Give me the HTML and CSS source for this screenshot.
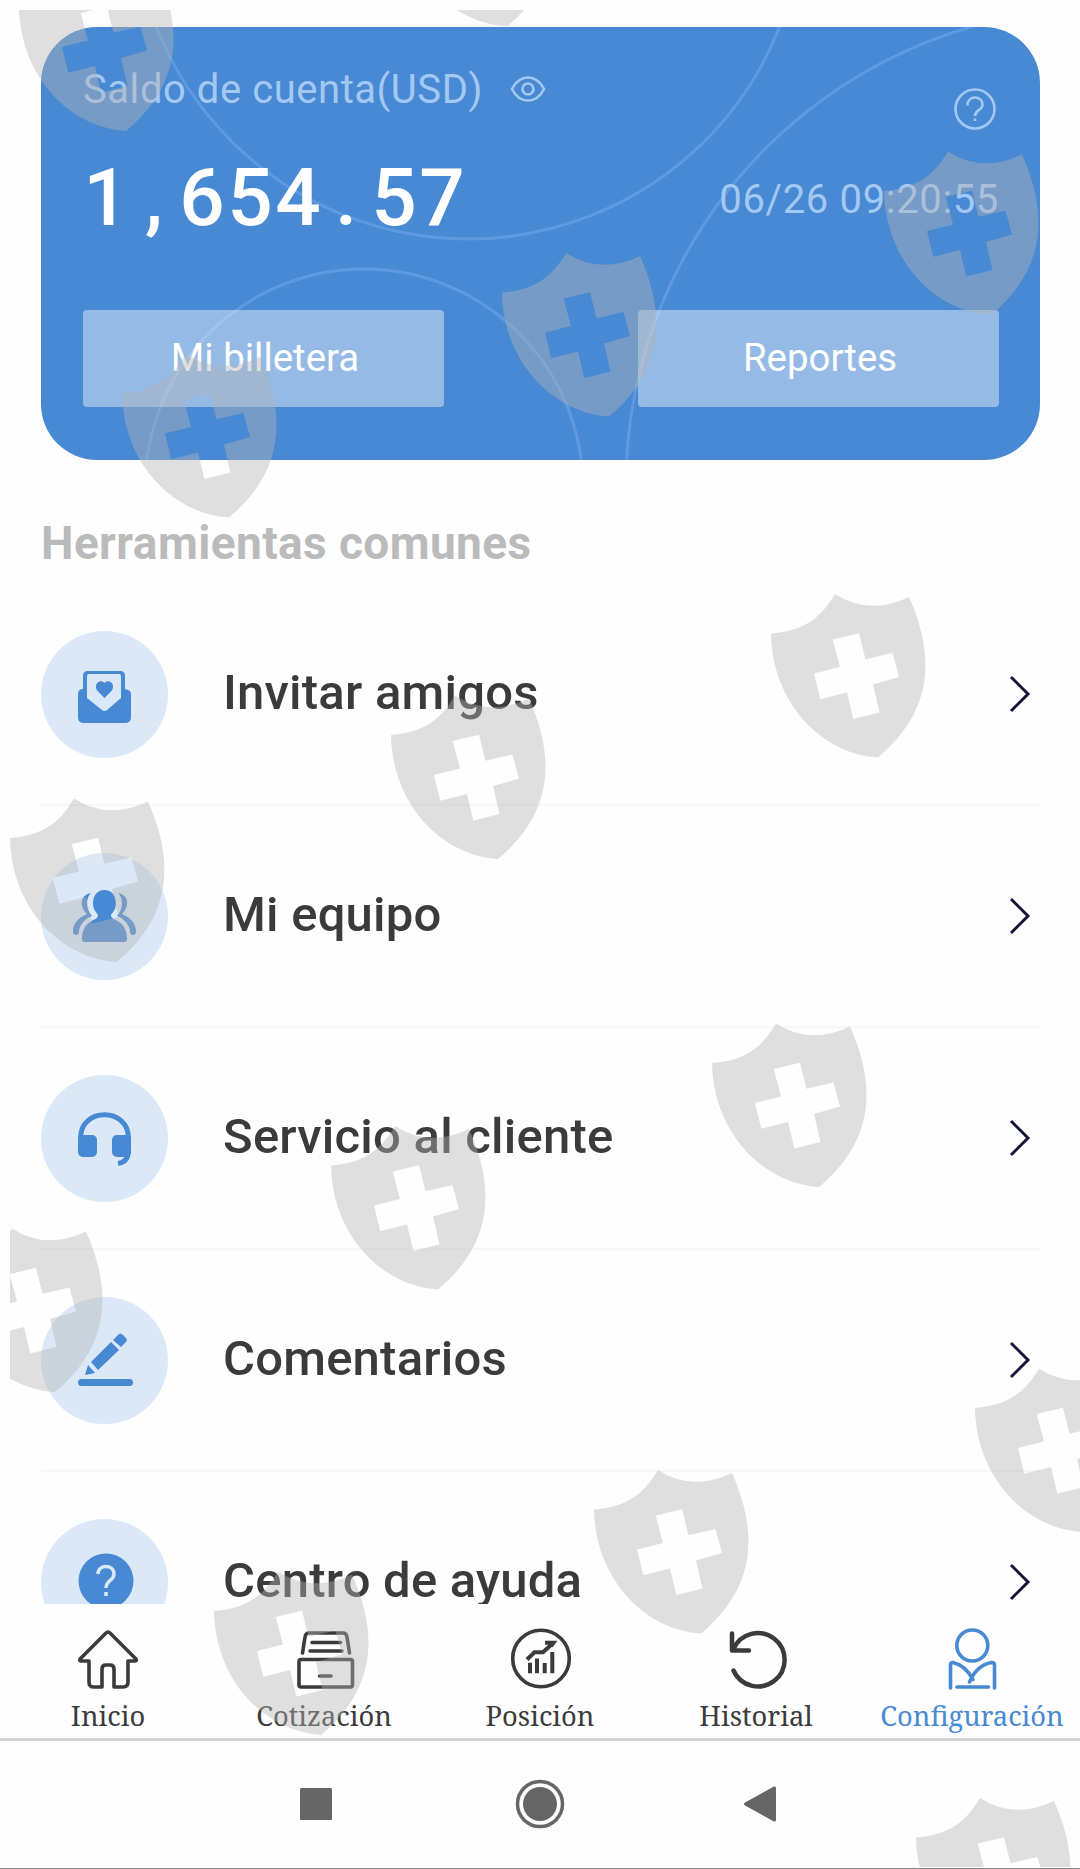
FILE: index.html
```html
<!DOCTYPE html>
<html lang="es">
	<head>
		<meta charset="UTF-8" />
		<meta name="viewport" content="width=device-width, initial-scale=1.0" />
		<title>Configuración</title>

		<link rel="stylesheet" href="styles.css">
	</head>

	<body>
		<div class="screen">
			<main class="content">
				<section class="card">
					<svg class="card__lines" viewBox="0 0 999 434">
						<circle cx="427" cy="-123" r="335" />
						<circle cx="323" cy="461" r="219" />
						<circle cx="1063" cy="459" r="478" />
					</svg>
					<div class="card__head">
						<span class="card__label">Saldo de cuenta(USD)</span>
						<svg class="icon-eye" viewBox="0 0 36 28">
							<path d="M2 14C6 6 11 2.500 18 2.500S30 6 34 14C30 22 25 25.500 18 25.500S6 22 2 14Z" />
							<circle cx="18" cy="14" r="5.500" />
						</svg>
						<svg class="icon-help" viewBox="0 0 44 44">
							<circle cx="22" cy="22" r="19.500" />
							<path d="M14.500 18.500C14 8 30 8 29.500 18C29 24 22 22.500 22 29M22 31.500V34" />
						</svg>
					</div>
					<div class="card__row">
						<div class="amount"><span>1</span><span>,</span><span>6</span><span>5</span><span>4</span><span>.</span><span>5</span><span>7</span></div>
						<span class="card__date">06/26 09:20:55</span>
					</div>
					<div class="card__buttons">
						<a class="btn" href="#">Mi billetera</a>
						<a class="btn" href="#">Reportes</a>
					</div>
				</section>

				<h2 class="title">Herramientas comunes</h2>

				<ul class="tools">
					<li class="tool">
						<span class="tool__icon">
							<svg viewBox="0 0 127 127">
								<path class="fill" d="M37 63Q37 58 42 58V45Q42 40 47 40H79Q84 40 84 45V58Q90 59 90 63V86Q90 92 84 92H43Q37 92 37 86Z" />
								<path class="pale" d="M46 45Q46 43 48 43H78Q80 43 80 45V67L66 79Q63.500 81 61 79L46 67Z" />
								<path class="fill" d="M63.500 67L56.500 60C51.500 53 59.500 47 63.500 52C67.500 47 75.500 53 70.500 60Z" />
							</svg>
						</span>
						<span class="tool__name">Invitar amigos</span>
						<svg class="chevron" viewBox="0 0 22 38"><path d="M2 2L19 19L2 36" /></svg>
					</li>
					<li class="tool">
						<span class="tool__icon">
							<svg viewBox="0 0 127 127">
								<path class="fill" d="M50 40C38 42 39 55 46 61C36 65 32 72 32 78Q32 82 35 82Q38 82 38 78C39 72 43 66 51 63C44 55 45 45 50 40ZM77 40C89 42 88 55 81 61C91 65 95 72 95 78Q95 82 92 82Q89 82 89 78C88 72 84 66 76 63C83 55 82 45 77 40Z" />
								<path class="fill" d="M63.500 37C56 37 52 43 52 50C52 56 55 59 57 62C57 66 53 66 49 69C43 73 41 79 41 86Q41 89 44 89H83Q86 89 86 86C86 79 84 73 78 69C74 66 70 66 70 62C72 59 75 56 75 50C75 43 71 37 63.500 37Z" />
							</svg>
						</span>
						<span class="tool__name">Mi equipo</span>
						<svg class="chevron" viewBox="0 0 22 38"><path d="M2 2L19 19L2 36" /></svg>
					</li>
					<li class="tool">
						<span class="tool__icon">
							<svg viewBox="0 0 127 127">
								<path class="stroke" d="M39.500 66V63C39.500 32 87.500 32 87.500 63V75Q87.500 87 77 88.500" />
								<rect class="fill" x="37" y="60" width="19" height="22" rx="5" />
								<rect class="fill" x="71" y="60" width="19" height="22" rx="5" />
							</svg>
						</span>
						<span class="tool__name">Servicio al cliente</span>
						<svg class="chevron" viewBox="0 0 22 38"><path d="M2 2L19 19L2 36" /></svg>
					</li>
					<li class="tool">
						<span class="tool__icon">
							<svg viewBox="0 0 127 127">
								<rect class="fill" x="37" y="82" width="55" height="7" rx="3.500" />
								<path class="fill" d="M77 38Q79 35 82 38L85 41Q87 43 84 46L80 50L72 43ZM70 45L78 53L57 73L50 65ZM47 68L54 76L44 78Z" />
							</svg>
						</span>
						<span class="tool__name">Comentarios</span>
						<svg class="chevron" viewBox="0 0 22 38"><path d="M2 2L19 19L2 36" /></svg>
					</li>
					<li class="tool">
						<span class="tool__icon">
							<svg viewBox="0 0 127 127">
								<circle class="fill" cx="65" cy="62" r="27.500" />
								<path class="mark" d="M57 55C57 45 73 45 73 55C73 62 65 61 65 69M65 73V77" />
							</svg>
						</span>
						<span class="tool__name">Centro de ayuda</span>
						<svg class="chevron" viewBox="0 0 22 38"><path d="M2 2L19 19L2 36" /></svg>
					</li>
				</ul>
			</main>

			<nav class="tabbar">
				<a class="tab" href="#">
					<svg viewBox="0 0 64 64">
						<path d="M32 5Q33 5 34 6L60 32Q61 34 59 34H52V55Q52 60 47 60H38V42Q38 38 34 38H30Q26 38 26 42V60H17Q13 60 13 55V34H5Q3 34 4 32L30 6Q31 5 32 5Z" />
					</svg>
					Inicio
				</a>
				<a class="tab" href="#">
					<svg viewBox="0 0 64 64">
						<path d="M10.500 26L13 10Q13.500 6 17 6H51Q54.500 6 55 10L57.500 26M20 15.500H48.500M18 24H50M9 32.500H58.500Q60.500 32.500 60.500 34.500V58Q60.500 60 58.500 60H9Q7 60 7 58V34.500Q7 32.500 9 32.500ZM27.500 49H39" />
					</svg>
					Cotización
				</a>
				<a class="tab" href="#">
					<svg viewBox="0 0 64 64">
						<circle cx="33" cy="31.500" r="28.300" />
						<path class="bars" d="M19 32.500L26.500 25.300H35L44 17M37 15.700H45.500L43 19M22 35.700V46.300M29 31.500V46.300M36.700 36V46.300M44.300 25V46.300" />
					</svg>
					Posición
				</a>
				<a class="tab" href="#">
					<svg class="thick" viewBox="0 0 64 64">
						<path d="M8 6.500V23.500H25M9.500 22A26.700 26.700 0 1 1 9.500 43.500" />
					</svg>
					Historial
				</a>
				<a class="tab tab--active" href="#">
					<svg viewBox="0 0 64 64">
						<circle cx="32.300" cy="18.500" r="15.500" />
						<path d="M10.500 61V38Q10.500 35.500 13 35.500Q25 38 33 52.500M29.500 55Q37 38 51.500 35.500Q54.500 35.500 54.500 38V61M17 60H48.500" />
					</svg>
					Configuración
				</a>
			</nav>

			<div class="sysbar">
				<svg viewBox="0 0 60 60"><rect x="14" y="14" width="32" height="32" rx="1.500" /></svg>
				<svg viewBox="0 0 60 60"><circle class="ring" cx="32" cy="30" r="22.500" /><circle cx="32" cy="30" r="17" /></svg>
				<svg viewBox="0 0 60 60"><path d="M15 28.500L44 12.500Q46 12 46 14V46Q46 48 44 47.500L15 31.500Q13 30 15 28.500Z" /></svg>
			</div>
		</div>

		<div class="watermark">
			<svg viewBox="10 10 1070 1857">
				<defs>
					<path id="shield" fill-rule="evenodd" d="M0 39.500C30 37 48 27 64 0Q98 22 138 3C166 66 160 119 107 163.500C50 160 1 108 0 39.500ZM61.700 45.600L88 39.300L94.500 65.300L121.500 59L128 83L102 90.600L108.500 118.600L82.300 125L76 98.600L49.300 105.300L43 79.600L69 73Z" />
				</defs>
				<use href="#shield" x="19" y="-32.500" />
				<use href="#shield" x="400" y="-137" />
				<use href="#shield" x="884" y="151.500" />
				<use href="#shield" x="502" y="253" />
				<use href="#shield" x="122" y="354" />
				<use href="#shield" x="771" y="594" />
				<use href="#shield" x="391" y="695.500" />
				<use href="#shield" x="10" y="798.500" />
				<use href="#shield" x="712" y="1023.500" />
				<use href="#shield" x="331" y="1126" />
				<use href="#shield" x="-52" y="1228.500" />
				<use href="#shield" x="975" y="1368.500" />
				<use href="#shield" x="594" y="1470" />
				<use href="#shield" x="214" y="1571.500" />
				<use href="#shield" x="916" y="1798" />
			</svg>
		</div>
	</body>
</html>
```
FILE: styles.css
```css
* {
	margin: 0;
	padding: 0;
	box-sizing: border-box;
}

body {
	background: #fefefe;
	font-family: Roboto, "Liberation Sans", sans-serif;
	color: #3b3b3b;
}

a {
	color: inherit;
	text-decoration: none;
}

ul {
	list-style: none;
}

svg {
	display: block;
	flex: none;
}

.screen {
	display: flex;
	flex-direction: column;
	height: 1869px;
	overflow: hidden;
	border-bottom: 1px solid #888;
}

.content {
	height: 1604px;
	flex: none;
	padding: 27px 40px 0 41px;
	overflow: hidden;
}

.card {
	position: relative;
	height: 433px;
	padding: 36px 41px 0 42px;
	border-radius: 56px;
	background: #4889d3;
	overflow: hidden;
	color: #a3c8f2;
	font-size: 40px;
}

.card__lines {
	position: absolute;
	top: 0;
	left: 0;
	width: 999px;
	height: 434px;
	fill: none;
	stroke: #5e9ae0;
	stroke-width: 3;
}

.card__head,
.card__row,
.card__buttons {
	position: relative;
	display: flex;
	justify-content: space-between;
}

.card__head {
	height: 69px;
	line-height: 54px;
}

.card__label {
	letter-spacing: 0.55px;
}

.icon-eye,
.icon-help {
	fill: none;
	stroke: #a3c8f2;
	stroke-width: 2.6;
}

.icon-eye {
	width: 36px;
	height: 28px;
	margin: 12px auto 0 27px;
}

.icon-help {
	width: 44px;
	height: 44px;
	margin: 24px 2px 0 0;
}

.card__row {
	height: 100px;
	margin-top: 23px;
}

.amount {
	display: flex;
	margin-left: -1px;
	color: #fff;
	font-size: 80px;
	font-weight: 500;
	line-height: 86px;
}

.amount span {
	width: 48px;
	text-align: center;
}

.card__date {
	margin-top: 18px;
	letter-spacing: 0.65px;
	line-height: 54px;
}

.card__buttons {
	margin-top: 55px;
}

.btn {
	width: 361px;
	height: 97px;
	border-radius: 4px;
	background: rgba(255, 255, 255, 0.42);
	color: #fff;
	font-size: 38.4px;
	line-height: 95px;
	text-indent: 3px;
	text-align: center;
}

.title {
	height: 124px;
	padding-top: 56px;
	color: #bbb;
	font-size: 46px;
	font-weight: 700;
	letter-spacing: 0.4px;
	line-height: 54px;
}

.tool {
	display: flex;
	align-items: center;
	height: 222px;
	border-bottom: 2px solid #f7f7f7;
}

.tool__icon {
	width: 127px;
	height: 127px;
	border-radius: 50%;
	background: #dae8f8;
}

.tool__icon .fill {
	fill: #4889d3;
}

.tool__icon .pale {
	fill: #dae8f8;
}

.tool__icon .stroke {
	fill: none;
	stroke: #4889d3;
	stroke-width: 5;
}

.tool__icon .mark {
	fill: none;
	stroke: #dae8f8;
	stroke-width: 3.5;
}

.tool__name {
	flex: 1;
	margin-left: 55px;
	padding-bottom: 4px;
	font-size: 49px;
	font-weight: 500;
	letter-spacing: 0.22px;
}

.chevron {
	width: 22px;
	height: 38px;
	margin: 0 9px 1px 0;
	fill: none;
	stroke: #17173a;
	stroke-width: 3;
}

.tabbar {
	display: flex;
	height: 137px;
	flex: none;
	border-bottom: 3px solid #d4d4d4;
}

.tab {
	display: flex;
	flex-direction: column;
	align-items: center;
	width: 216px;
	padding-top: 23px;
	font-family: "Noto Serif", "DejaVu Serif Condensed", "DejaVu Serif", serif;
	font-size: 27.3px;
	line-height: 49px;
}

.tab svg {
	width: 64px;
	height: 64px;
	overflow: visible;
	fill: none;
	stroke: currentColor;
	stroke-width: 3.6;
	stroke-linecap: round;
	stroke-linejoin: round;
}

.tab svg.thick {
	stroke-width: 4.5;
}

.tab .bars {
	stroke-width: 4;
	stroke-linecap: butt;
	stroke-linejoin: miter;
}

.tab--active {
	color: #4889d3;
}

.sysbar {
	display: flex;
	justify-content: space-between;
	padding: 33px 290px 0 286px;
}

.sysbar svg {
	width: 60px;
	height: 60px;
	fill: #666;
}

.sysbar .ring {
	fill: none;
	stroke: #666;
	stroke-width: 3.5;
}

/* shields lie over the whole page */
.watermark {
	position: absolute;
	top: 10px;
	left: 10px;
	width: 1070px;
	height: 1857px;
	overflow: hidden;
	pointer-events: none;
}

.watermark svg {
	width: 1070px;
	height: 1857px;
	fill: rgba(180, 180, 180, 0.415);
}
```
